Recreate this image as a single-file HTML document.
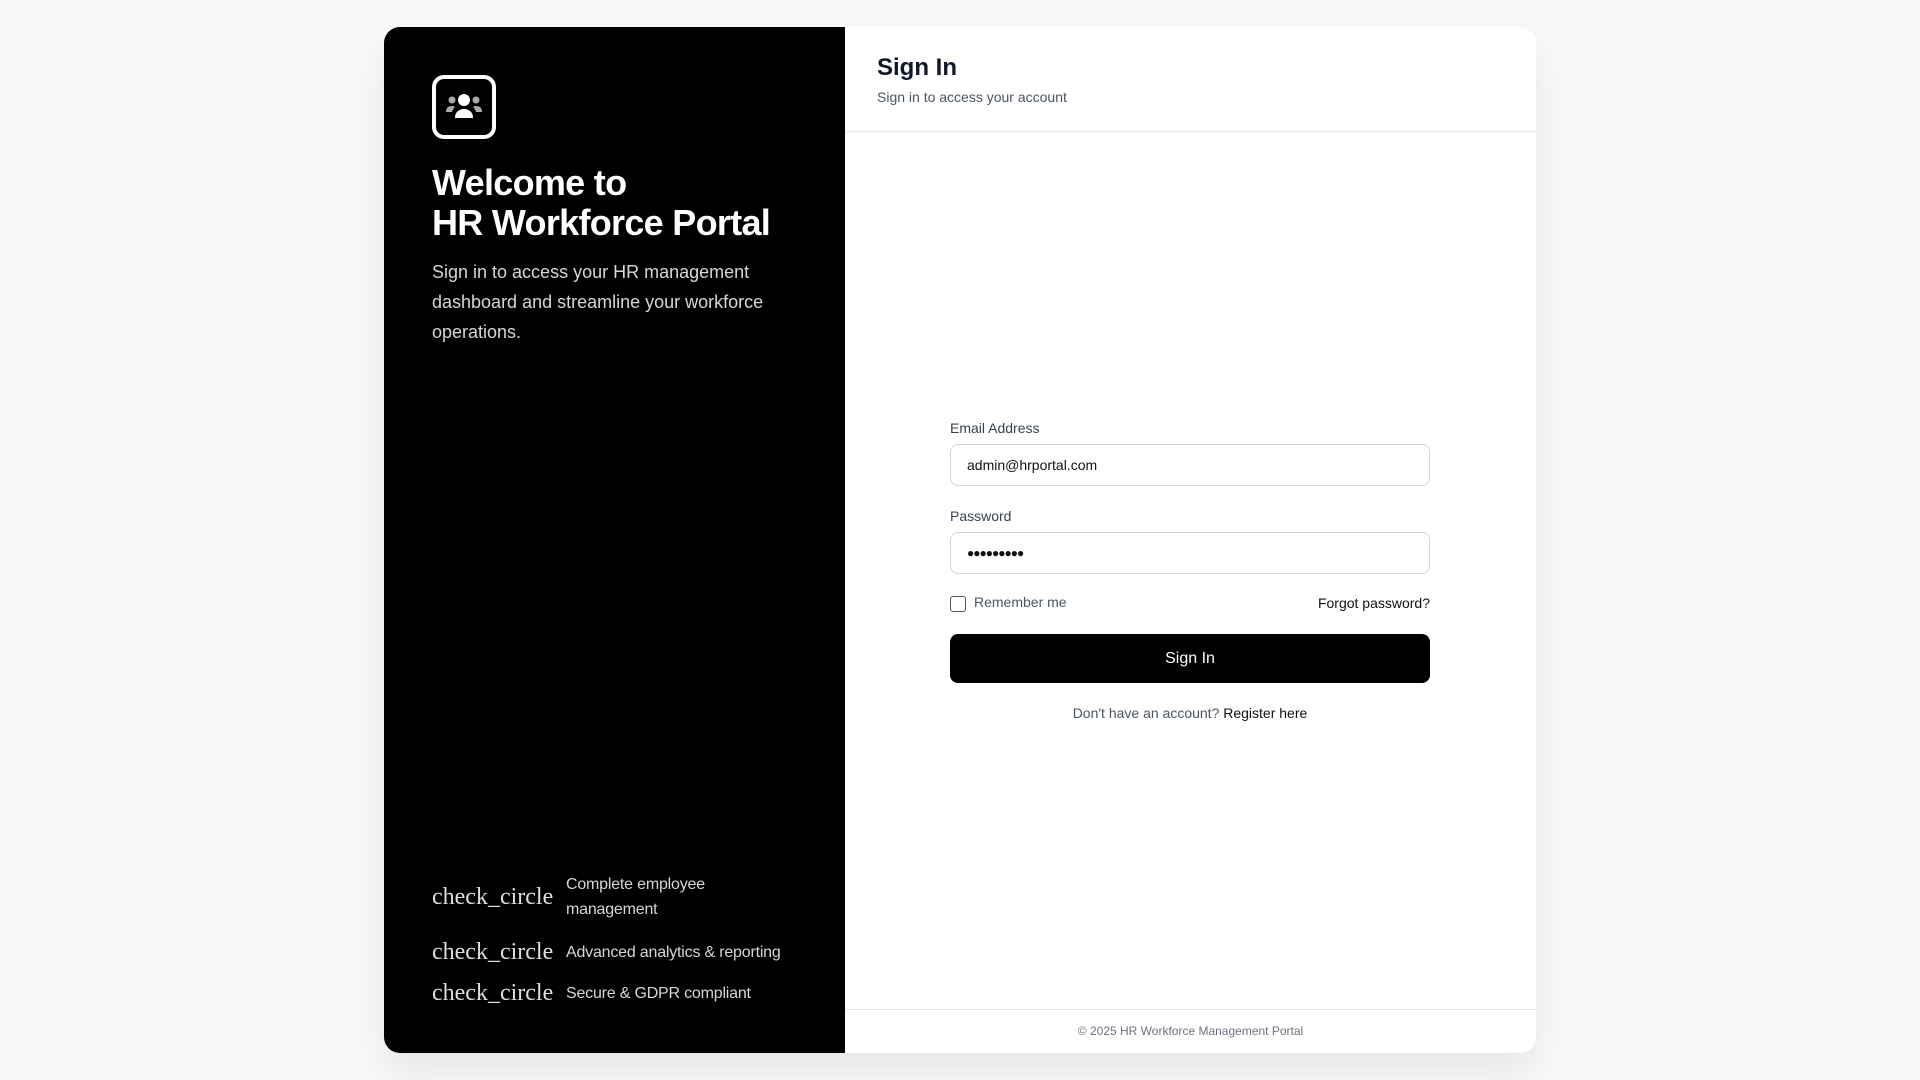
<!DOCTYPE html>
<html><head><meta charset="utf-8"><style>
*{box-sizing:border-box;margin:0;padding:0}
body{width:1920px;height:1080px;background:#f8f9fb;font-family:"Liberation Sans",sans-serif;position:relative;overflow:hidden}
.card{position:absolute;left:384px;top:27px;width:1152px;height:1026px;border-radius:16px;background:#fff;box-shadow:0 20px 40px rgba(0,0,0,.08);overflow:hidden;display:flex}
.left{width:461px;background:#000;color:#fff;position:relative;padding:48px}
.logo{position:absolute;left:48px;top:48px;width:64px;height:64px;border:4px solid #fff;border-radius:12px;display:flex;align-items:center;justify-content:center}
h1{position:absolute;left:48px;top:136px;font-size:36px;line-height:40px;font-weight:700;letter-spacing:-0.7px}
.lp{position:absolute;left:48px;top:230px;width:360px;font-size:18px;line-height:30px;color:#d6d6d6}
.feat{position:absolute;left:48px;display:flex;align-items:center}
.feat .ic{font-family:"Liberation Serif",serif;font-size:24px;color:#ddd;width:134px}
.feat .t{font-size:16px;line-height:25px;color:#d6d6d6;width:230px;letter-spacing:-0.2px}
.right{flex:1;position:relative}
.hd{height:105px;border-bottom:1px solid #e5e7eb;padding:25px 32px}
.hd h2{font-size:24px;line-height:32px;color:#111827;font-weight:700}
.hd p{font-size:14px;color:#4b5563;margin-top:5px}
.form{position:absolute;left:105px;top:390px;width:480px}
label{display:block;font-size:14px;color:#374151;height:27px;padding-top:3px}
.in{height:42px;border:1px solid #d1d5db;border-radius:8px;padding:0 16px;font-size:14px;line-height:40px;color:#111;margin-bottom:19px}
.row{display:flex;justify-content:space-between;align-items:center;font-size:14px;height:20px}
.cb{width:16px;height:16px;border:1.5px solid #555;border-radius:3px;display:inline-block;vertical-align:middle;margin-right:8px}
.btn{margin-top:21px;height:49px;background:#000;border-radius:8px;color:#fff;font-size:16px;text-align:center;line-height:49px}
.reg{text-align:center;font-size:14px;color:#4b5563;margin-top:22px}
.ft{position:absolute;left:0;right:0;bottom:0;height:44px;border-top:1px solid #e5e7eb;text-align:center;font-size:12px;line-height:42px;color:#6b7280}
</style></head><body>
<div class="card">
<div class="left">
<div class="logo"><svg width="40" height="34" viewBox="0 0 40 34"><circle cx="20" cy="10" r="6" fill="#fff"/><path d="M11 28c0-6 4-9 9-9s9 3 9 9z" fill="#fff"/><circle cx="8" cy="10" r="3.5" fill="#aaa"/><circle cx="32" cy="10" r="3.5" fill="#aaa"/><path d="M2 22c0-4 2-6 6-6 1.5 0 2.5.4 3 1-1.5 1.5-2.5 3-3 5z" fill="#aaa"/><path d="M38 22c0-4-2-6-6-6-1.5 0-2.5.4-3 1 1.5 1.5 2.5 3 3 5z" fill="#aaa"/></svg></div>
<h1>Welcome to<br>HR Workforce Portal</h1>
<p class="lp">Sign in to access your HR management dashboard and streamline your workforce operations.</p>
<div class="feat" style="top:845px"><span class="ic">check_circle</span><span class="t">Complete employee management</span></div>
<div class="feat" style="top:912px"><span class="ic">check_circle</span><span class="t" style="width:260px">Advanced analytics &amp; reporting</span></div>
<div class="feat" style="top:953px"><span class="ic">check_circle</span><span class="t">Secure &amp; GDPR compliant</span></div>
</div>
<div class="right">
<div class="hd"><h2>Sign In</h2><p>Sign in to access your account</p></div>
<div class="form">
<label>Email Address</label><div class="in">admin@hrportal.com</div>
<label>Password</label><div class="in" style="font-size:12px;letter-spacing:-1px">●●●●●●●●●</div>
<div class="row" style="margin-top:8px"><span style="color:#4b5563"><span class="cb"></span>Remember me</span><span style="color:#111">Forgot password?</span></div>
<div class="btn">Sign In</div>
<div class="reg">Don't have an account? <span style="color:#111">Register here</span></div>
</div>
<div class="ft">© 2025 HR Workforce Management Portal</div>
</div>
</div>
</body></html>
